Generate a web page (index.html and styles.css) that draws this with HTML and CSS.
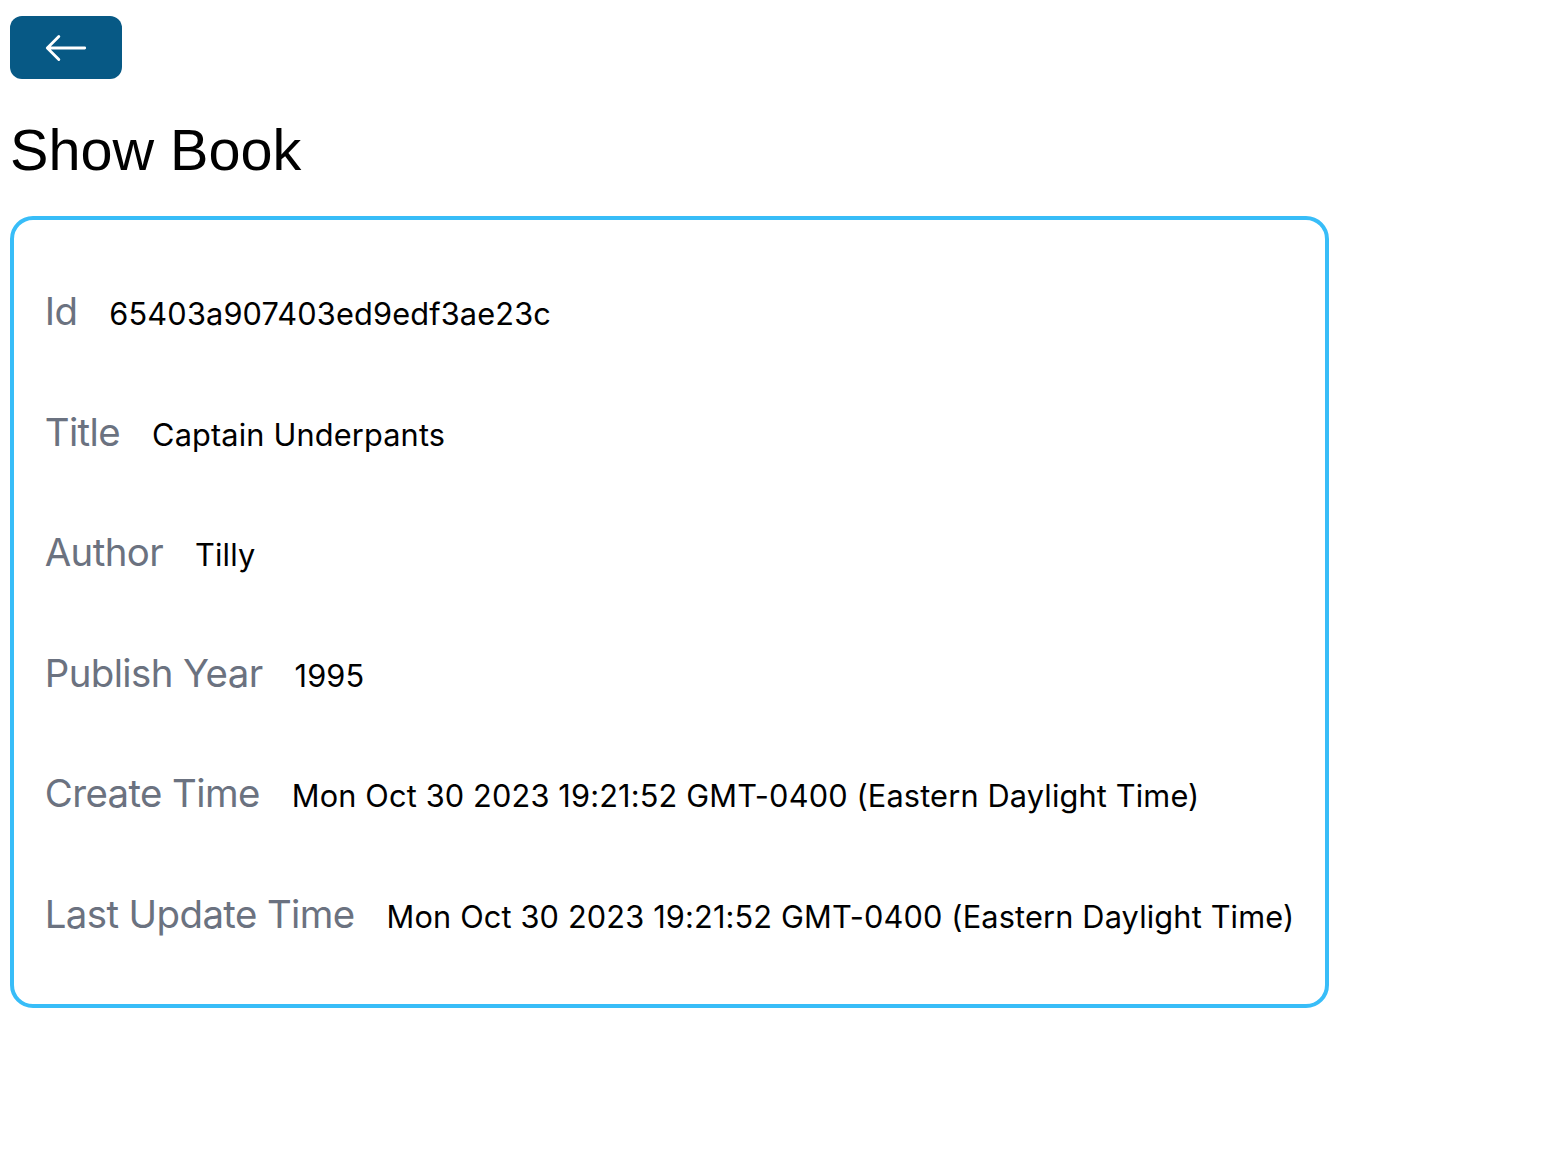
FILE: index.html
```html
<!DOCTYPE html>
<html lang="en">
<head>
<meta charset="utf-8">
<title>Show Book</title>
<link rel="stylesheet" href="styles.css">
</head>
<body>
<div class="page">
  <div class="back-wrap">
    <a class="back-btn" href="#">
      <svg class="back-icon" viewBox="0 0 16 16" fill="currentColor" aria-hidden="true"><path fill-rule="evenodd" d="M15 8a.5.5 0 0 0-.5-.5H2.707l3.147-3.146a.5.5 0 1 0-.708-.708l-4 4a.5.5 0 0 0 0 .708l4 4a.5.5 0 0 0 .708-.708L2.707 8.5H14.5A.5.5 0 0 0 15 8z"/></svg>
    </a>
  </div>
  <h1 class="title">Show Book</h1>
  <div class="card">
    <div class="row"><span class="label">Id</span><span class="value">65403a907403ed9edf3ae23c</span></div>
    <div class="row"><span class="label">Title</span><span class="value">Captain Underpants</span></div>
    <div class="row"><span class="label">Author</span><span class="value">Tilly</span></div>
    <div class="row"><span class="label">Publish Year</span><span class="value">1995</span></div>
    <div class="row"><span class="label">Create Time</span><span class="value">Mon Oct 30 2023 19:21:52 GMT-0400 (Eastern Daylight Time)</span></div>
    <div class="row"><span class="label">Last Update Time</span><span class="value">Mon Oct 30 2023 19:21:52 GMT-0400 (Eastern Daylight Time)</span></div>
  </div>
</div>
</body>
</html>
```

FILE: styles.css
```css
html, body {
  margin: 0;
  padding: 0;
  background: #ffffff;
}

body {
  font-family: Inter, "Noto Sans", "DejaVu Sans", sans-serif;
  color: #000000;
}

.page {
  padding: 16px 10px;
}

.back-wrap {
  display: flex;
}

.back-btn {
  display: flex;
  align-items: center;
  justify-content: center;
  width: 112px;
  height: 63px;
  background: #075985;
  border-radius: 12px;
  color: #ffffff;
  text-decoration: none;
}

.back-icon {
  width: 46px;
  height: 46px;
  display: block;
}

.title {
  font-family: "Liberation Sans", Arial, sans-serif;
  font-weight: 400;
  font-size: 57.6px;
  line-height: 75px;
  margin: 34px 0 28px;
}

.card {
  display: flex;
  flex-direction: column;
  width: fit-content;
  border: 4px solid #38bdf8;
  border-radius: 23px;
  padding: 30.72px;
}

.row {
  display: flex;
  align-items: baseline;
  margin: 30.72px 0;
  height: 55px;
  padding-top: 4px;
}

.label {
  font-size: 38.4px;
  line-height: 53.76px;
  color: #6b7280;
  margin-right: 32px;
  letter-spacing: -0.6px;
  white-space: nowrap;
}

.value {
  font-size: 30.72px;
  line-height: 46px;
  letter-spacing: 0.15px;
  white-space: nowrap;
}
```
